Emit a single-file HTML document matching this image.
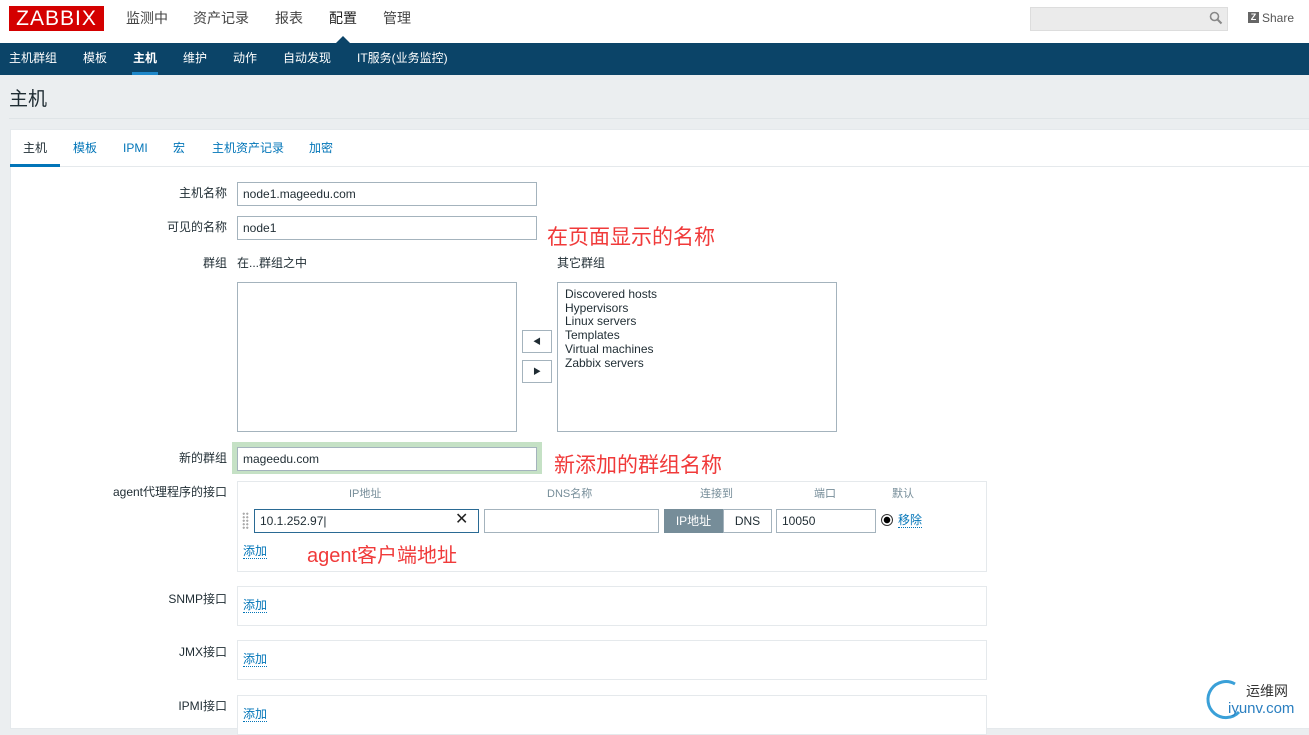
<!DOCTYPE html><html><head><meta charset="utf-8"><style>
*{box-sizing:border-box;margin:0;padding:0}
body{width:1309px;height:725px;overflow:hidden;background:#ebeef0;font-family:"Liberation Sans","Noto Sans CJK SC",sans-serif;font-size:12px;line-height:1.2;color:#1f2c33;position:relative}
.a{position:absolute}
.hdr{left:0;top:0;width:1309px;height:43px;background:#fff}
.nav{left:0;top:43px;width:1309px;height:32px;background:#0b4468}
.logo{left:9px;top:6px;width:95px;height:25px;background:#d40000;color:#fff;font-size:21px;line-height:25px;text-align:center;letter-spacing:1px}
.tm{top:10px;font-size:14px;color:#444}
.nv{top:51px;color:#fff;font-size:12px}
.inp{background:#fff;border:1px solid #a4b3bd;height:24px;padding:0 5px;line-height:22px;font-size:12px}
.lbl{right:1082px;font-size:12px;text-align:right}
.lnk{color:#0275b8;border-bottom:1px dotted #0275b8;line-height:13px}
.red{color:#f03a3a;font-size:21px;line-height:1}
.box{background:#fff;border:1px solid #e5e9ec}
.hd{color:#768d99;font-size:11px;top:488px}
</style></head><body>
<div class="a hdr"></div>
<div class="a logo">ZABBIX</div>
<div class="a tm" style="left:126px">监测中</div>
<div class="a tm" style="left:193px">资产记录</div>
<div class="a tm" style="left:275px">报表</div>
<div class="a tm" style="left:329px;color:#222">配置</div>
<div class="a tm" style="left:383px">管理</div>
<div class="a" style="left:1030px;top:7px;width:198px;height:24px;background:#ebebeb;border:1px solid #ddd"></div>
<svg class="a" style="left:1209px;top:11px" width="14" height="14"><circle cx="5.5" cy="5.5" r="4" fill="none" stroke="#888" stroke-width="1.6"/><line x1="8.5" y1="8.5" x2="12.5" y2="12.5" stroke="#888" stroke-width="2"/></svg>
<div class="a" style="left:1248px;top:12px;width:11px;height:11px;background:#666;color:#fff;font-size:9px;font-weight:bold;text-align:center;line-height:11px">Z</div>
<div class="a" style="left:1262px;top:11px;font-size:12px;color:#555">Share</div>
<div class="a nav"></div>
<div class="a" style="left:336px;top:36px;width:0;height:0;border-left:7px solid transparent;border-right:7px solid transparent;border-bottom:7px solid #0b4468"></div>
<div class="a nv" style="left:9px">主机群组</div>
<div class="a nv" style="left:83px">模板</div>
<div class="a nv" style="left:133px;font-weight:bold">主机</div>
<div class="a" style="left:132px;top:72px;width:26px;height:3px;background:#1e87c9"></div>
<div class="a nv" style="left:183px">维护</div>
<div class="a nv" style="left:233px">动作</div>
<div class="a nv" style="left:283px">自动发现</div>
<div class="a nv" style="left:357px">IT服务(业务监控)</div>
<div class="a" style="left:9px;top:89px;font-size:19px;color:#1f2c33">主机</div>
<div class="a" style="left:9px;top:118px;width:1300px;height:1px;background:#dfe4e7"></div>
<div class="a box" style="left:10px;top:129px;width:1310px;height:600px"></div>
<div class="a" style="left:10px;top:166px;width:1299px;height:1px;background:#e5e9ec"></div>
<div class="a" style="left:23px;top:141px">主机</div>
<div class="a" style="left:10px;top:164px;width:50px;height:3px;background:#0275b8"></div>
<div class="a" style="left:73px;top:141px;color:#0275b8">模板</div>
<div class="a" style="left:123px;top:141px;color:#0275b8">IPMI</div>
<div class="a" style="left:173px;top:141px;color:#0275b8">宏</div>
<div class="a" style="left:212px;top:141px;color:#0275b8">主机资产记录</div>
<div class="a" style="left:309px;top:141px;color:#0275b8">加密</div>

<div class="a lbl" style="top:186px">主机名称</div>
<div class="a inp" style="left:237px;top:182px;width:300px">node1.mageedu.com</div>
<div class="a lbl" style="top:220px">可见的名称</div>
<div class="a inp" style="left:237px;top:216px;width:300px">node1</div>
<div class="a red" style="left:547px;top:227px">在页面显示的名称</div>
<div class="a lbl" style="top:256px">群组</div>
<div class="a" style="left:237px;top:256px">在...群组之中</div>
<div class="a" style="left:557px;top:256px">其它群组</div>
<div class="a" style="left:237px;top:282px;width:280px;height:150px;background:#fff;border:1px solid #a4b3bd"></div>
<div class="a" style="left:557px;top:282px;width:280px;height:150px;background:#fff;border:1px solid #a4b3bd;padding:5px 7px;line-height:13.7px">Discovered hosts<br>Hypervisors<br>Linux servers<br>Templates<br>Virtual machines<br>Zabbix servers</div>
<div class="a" style="left:522px;top:330px;width:30px;height:23px;background:#fff;border:1px solid #a4b3bd;font-size:8px;text-align:center;line-height:21px">◀</div>
<div class="a" style="left:522px;top:360px;width:30px;height:23px;background:#fff;border:1px solid #a4b3bd;font-size:8px;text-align:center;line-height:21px">▶</div>
<div class="a lbl" style="top:451px">新的群组</div>
<div class="a" style="left:232px;top:442px;width:310px;height:32px;background:#c5e1c5"></div>
<div class="a inp" style="left:237px;top:447px;width:300px">mageedu.com</div>
<div class="a red" style="left:554px;top:455px">新添加的群组名称</div>
<div class="a lbl" style="top:485px">agent代理程序的接口</div>
<div class="a box" style="left:237px;top:481px;width:750px;height:91px"></div>
<div class="a hd" style="left:349px">IP地址</div>
<div class="a hd" style="left:547px">DNS名称</div>
<div class="a hd" style="left:700px">连接到</div>
<div class="a hd" style="left:814px">端口</div>
<div class="a hd" style="left:892px">默认</div>
<div class="a" style="left:242px;top:512px;width:7px;height:18px;background-image:radial-gradient(#aaa 1px,transparent 1.2px);background-size:3.5px 3.5px"></div>
<div class="a inp" style="left:254px;top:509px;width:225px;border-color:#2a6a94">10.1.252.97|</div>
<div class="a" style="left:455px;top:510px;font-size:16px;color:#222">✕</div>
<div class="a inp" style="left:484px;top:509px;width:175px"></div>
<div class="a" style="left:664px;top:509px;width:59px;height:24px;background:#768d99;color:#fff;text-align:center;line-height:24px">IP地址</div>
<div class="a" style="left:723px;top:509px;width:49px;height:24px;background:#fff;border:1px solid #a4b3bd;text-align:center;line-height:22px">DNS</div>
<div class="a inp" style="left:776px;top:509px;width:100px">10050</div>
<div class="a" style="left:881px;top:514px;width:12px;height:12px;border:1px solid #333;border-radius:50%;background:radial-gradient(#000 3px,#fff 3.5px)"></div>
<div class="a lnk" style="left:898px;top:514px">移除</div>
<div class="a lnk" style="left:243px;top:545px">添加</div>
<div class="a red" style="left:307px;top:546px;font-size:20px">agent客户端地址</div>
<div class="a lbl" style="top:592px">SNMP接口</div>
<div class="a box" style="left:237px;top:586px;width:750px;height:40px"></div>
<div class="a lnk" style="left:243px;top:599px">添加</div>
<div class="a lbl" style="top:645px">JMX接口</div>
<div class="a box" style="left:237px;top:640px;width:750px;height:40px"></div>
<div class="a lnk" style="left:243px;top:653px">添加</div>
<div class="a lbl" style="top:699px">IPMI接口</div>
<div class="a box" style="left:237px;top:695px;width:750px;height:40px"></div>
<div class="a lnk" style="left:243px;top:708px">添加</div>
<svg class="a" style="left:1205px;top:676px" width="40" height="45"><path d="M30 8 A18 18 0 1 0 34 36" fill="none" stroke="#3aa0d8" stroke-width="3"/></svg>
<div class="a" style="left:1246px;top:683px;font-size:14px;color:#333">运维网</div>
<div class="a" style="left:1228px;top:700px;font-size:15px;color:#2a7fc0">iyunv.com</div>
</body></html>
